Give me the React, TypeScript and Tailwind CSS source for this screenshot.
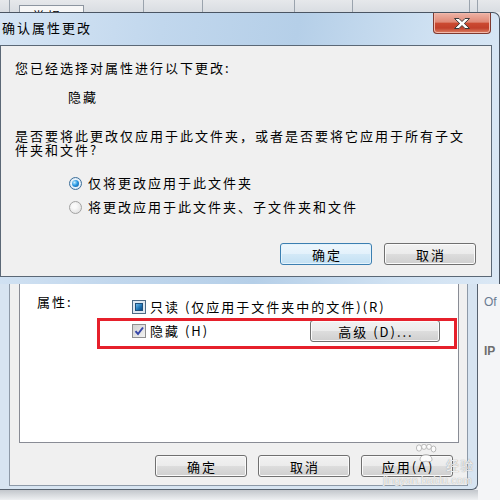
import React from 'react';

// Windows 7 style "confirm attribute changes" dialog over a folder properties window

const WinButton = ({ label, focused = false, className = '' }: { label: string; focused?: boolean; className?: string }) => (
  <div
    className={`flex h-[22px] items-center justify-center rounded-[3px] border pl-[2px] text-[13px] leading-none tracking-[2px] text-black ${
      focused
        ? 'border-[#3c7fb1] bg-[linear-gradient(#eef7fd_0%,#e3f1fb_50%,#d3e9f7_51%,#c3e0f3_100%)] shadow-[inset_0_0_0_1px_#e4f3fc]'
        : 'border-[#707070] bg-[linear-gradient(#f2f2f2_0%,#ebebeb_50%,#dddddd_51%,#cfcfcf_100%)] shadow-[inset_0_0_0_1px_#fbfbfb]'
    } ${className}`}
  >
    {label}
  </div>
);

const Radio = ({ checked }: { checked?: boolean }) =>
  checked ? (
    <div className="flex h-[13px] w-[13px] items-center justify-center rounded-full border border-[#3d6f99] bg-[radial-gradient(circle,#f4faff_40%,#bcd6ec_100%)]">
      <div className="h-[7px] w-[7px] rounded-full bg-[radial-gradient(circle_at_35%_35%,#c8f0ff_0%,#2a9ae4_45%,#0b4e8f_100%)]" />
    </div>
  ) : (
    <div className="h-[13px] w-[13px] rounded-full border border-[#a2a2a2] bg-[radial-gradient(circle_at_40%_40%,#fafafa_20%,#dadada_100%)]" />
  );

const App = () => {
  return (
    <div className="relative h-[500px] w-[500px] overflow-hidden bg-[#eceef1] font-['Noto_Sans_CJK_SC','Liberation_Sans',sans-serif] text-black">
      {/* strip of the window behind, above the dialog */}
      <div className="flex h-[12px] bg-[linear-gradient(#e6e8eb,#d9dde2)]">
        <div className="w-[10px] border-r border-[#9aa3ad]" />
        <div className="w-[9px]" />
        <div className="mt-[5px] h-[7px] w-[65px] overflow-hidden border border-b-0 border-[#8c95a0] bg-[#f7f7f7] pl-[12px] pt-[3px] text-[13px] leading-[13px] tracking-[2px]">
          常规
        </div>
        <div className="w-[60px] border-r border-[#9aa3ad]" />
        <div className="w-[59px] border-r border-[#9aa3ad]" />
        <div className="w-[92px] border-r border-[#9aa3ad]" />
        <div className="w-[58px] border-r border-[#9aa3ad]" />
        <div className="w-[117px] border-r border-[#9aa3ad]" />
        <div className="w-[8px] border-r border-[#9aa3ad]" />
      </div>

      {/* confirm dialog */}
      <div className="flex h-[272px] flex-col rounded-tr-[7px] border-t border-r border-[#4a5563] bg-[linear-gradient(100deg,#d6e5f4_0%,#c1d7ed_30%,#b5cfe8_55%,#cfe1f2_80%,#dbe8f5_100%)] pr-[7px] pb-[7px]">
        <div className="flex h-[32px] items-start">
          <span className="pl-[2px] pt-[7px] text-[13px] leading-[16px] tracking-[2px]">确认属性更改</span>
          <div className="ml-auto mr-[1px] flex h-[21px] w-[58px] items-center justify-center rounded-b-[4px] border border-t-0 border-[#7f3a30] bg-[linear-gradient(#eeb3a6_0%,#e08a77_45%,#cb4a31_52%,#c2402a_75%,#dc8266_100%)] shadow-[inset_0_0_0_1px_#f2b9ab]">
            <svg width="16" height="11" viewBox="0 0 16 11">
              <polygon
                points="0.5,0.5 5,0.5 8,3.5 11,0.5 15.5,0.5 10.3,5.5 15.5,10.5 11,10.5 8,7.5 5,10.5 0.5,10.5 5.7,5.5"
                fill="#ffffff"
                stroke="#3b3b3b"
                strokeWidth="1"
                strokeLinejoin="round"
              />
            </svg>
          </div>
        </div>

        <div className="flex h-[232px] flex-col border border-[#5b6876] bg-[#f0f0f0] pl-[14px] pr-[15px] text-[13px] tracking-[2px]">
          <div className="mt-[14px] whitespace-nowrap leading-[16px]">您已经选择对属性进行以下更改:</div>
          <div className="mt-[13px] whitespace-nowrap pl-[53px] leading-[16px]">隐藏</div>
          <div className="mt-[24px] flex flex-col">
            <span className="h-[14px] whitespace-nowrap leading-[14px]">是否要将此更改仅应用于此文件夹，或者是否要将它应用于所有子文</span>
            <span className="h-[14px] whitespace-nowrap leading-[14px]">件夹和文件?</span>
          </div>
          <div className="mt-[18px] flex h-[16px] items-center pl-[54px]">
            <Radio checked />
            <span className="ml-[6px] whitespace-nowrap leading-[16px]">仅将更改应用于此文件夹</span>
          </div>
          <div className="mt-[8px] flex h-[16px] items-center pl-[54px]">
            <Radio />
            <span className="ml-[6px] whitespace-nowrap leading-[16px]">将更改应用于此文件夹、子文件夹和文件</span>
          </div>
          <div className="mt-[28px] flex justify-end gap-[12px]">
            <WinButton label="确定" focused className="w-[92px]" />
            <WinButton label="取消" className="w-[92px]" />
          </div>
        </div>
      </div>

      {/* lower part of the properties window */}
      <div className="flex h-[216px]">
        <div className="flex w-[478px] flex-col">
          <div className="flex h-[206px] flex-col rounded-br-[6px] border-r border-b border-[#56616e] bg-[#d7e4f1] pl-[9px] pr-[9px] pb-[3px]">
            <div className="flex flex-1 flex-col border-x border-b border-[#8d99a7] bg-[#f0f0f0] pl-[9px] pr-[8px]">
              <div className="relative h-[159px] border-x border-b border-[#898c95] bg-white text-[13px] tracking-[2px]">
                <div className="flex pl-[17px] pt-[10px]">
                  <span className="w-[95px] whitespace-nowrap leading-[16px]">属性:</span>
                  <div className="flex flex-col">
                    <div className="mt-[5px] flex h-[16px] items-center">
                      <div className="h-[14px] w-[14px] border border-[#4d6a85] bg-[#dde8f2] p-[2px]">
                        <div className="h-full w-full border border-[#1d4f7c] bg-[linear-gradient(135deg,#6ab7ea,#1c72b3_60%,#0e4d86)]" />
                      </div>
                      <span className="ml-[4px] whitespace-nowrap leading-[16px]">只读 (仅应用于文件夹中的文件)(R)</span>
                    </div>
                    <div className="mt-[5px] flex h-[22px] items-center">
                      <div className="h-[14px] w-[14px] border border-[#8f8f8f] bg-[linear-gradient(135deg,#d2d2d2,#f2f2f2)]">
                        <svg width="12" height="12" viewBox="0 0 12 12">
                          <path d="M2.5 6.2 L5 9 L10 2.5" fill="none" stroke="#3646a8" strokeWidth="2" />
                        </svg>
                      </div>
                      <span className="ml-[4px] w-[160px] whitespace-nowrap leading-[16px]">隐藏 (H)</span>
                      <WinButton label="高级 (D)..." className="w-[130px]" />
                    </div>
                  </div>
                </div>
                {/* red annotation box */}
                <div className="absolute left-[77px] top-[34px] h-[31px] w-[360px] border-[3px] border-[#e6202b]" />
              </div>
              <div className="mt-[12px] flex justify-end gap-[11px] pr-[6px]">
                <WinButton label="确定" className="w-[92px]" />
                <WinButton label="取消" className="w-[92px]" />
                <WinButton label="应用(A)" className="w-[92px]" />
              </div>
            </div>
          </div>
          <div className="h-[10px] bg-[linear-gradient(#c3c7cc,#eef0f2)]" />
        </div>

        {/* edge of another window on the right */}
        <div className="flex flex-1 flex-col bg-[#f4f5f7] pl-[6px] font-['Liberation_Sans',sans-serif]">
          <span className="mt-[11px] text-[12px] leading-[14px] text-[#6a7b92]">Of</span>
          <span className="mt-[35px] text-[12px] font-bold leading-[14px] text-[#6e6e6e]">IP</span>
        </div>
      </div>

      {/* watermark */}
      <svg className="absolute left-[414px] top-[444px] opacity-80" width="24" height="19" viewBox="0 0 24 19">
        <g fill="#ffffff" stroke="#9a9a9a" strokeWidth="0.8">
          <ellipse cx="5" cy="4" rx="2.6" ry="3.2" />
          <ellipse cx="10" cy="2.8" rx="2.4" ry="2.6" />
          <ellipse cx="15" cy="2.8" rx="2.4" ry="2.6" />
          <ellipse cx="19.5" cy="5" rx="2.4" ry="3" />
          <path d="M6 15 C7 9 17 9 18 15 C18.5 18 14 18.5 12 17 C10 18.5 5.5 18 6 15 Z" />
        </g>
      </svg>
      <div className="absolute left-[446px] top-[458px] text-[13px] leading-none tracking-[1px] text-white/85 [text-shadow:0_0_1px_#7a7a7a]">
        经验
      </div>
      <div className="absolute left-[383px] top-[475px] font-['Liberation_Sans',sans-serif] text-[11px] leading-none text-white/85 [text-shadow:0_0_1px_#8a8a8a]">
        jingyan.baidu.com
      </div>
    </div>
  );
};

export default App;
